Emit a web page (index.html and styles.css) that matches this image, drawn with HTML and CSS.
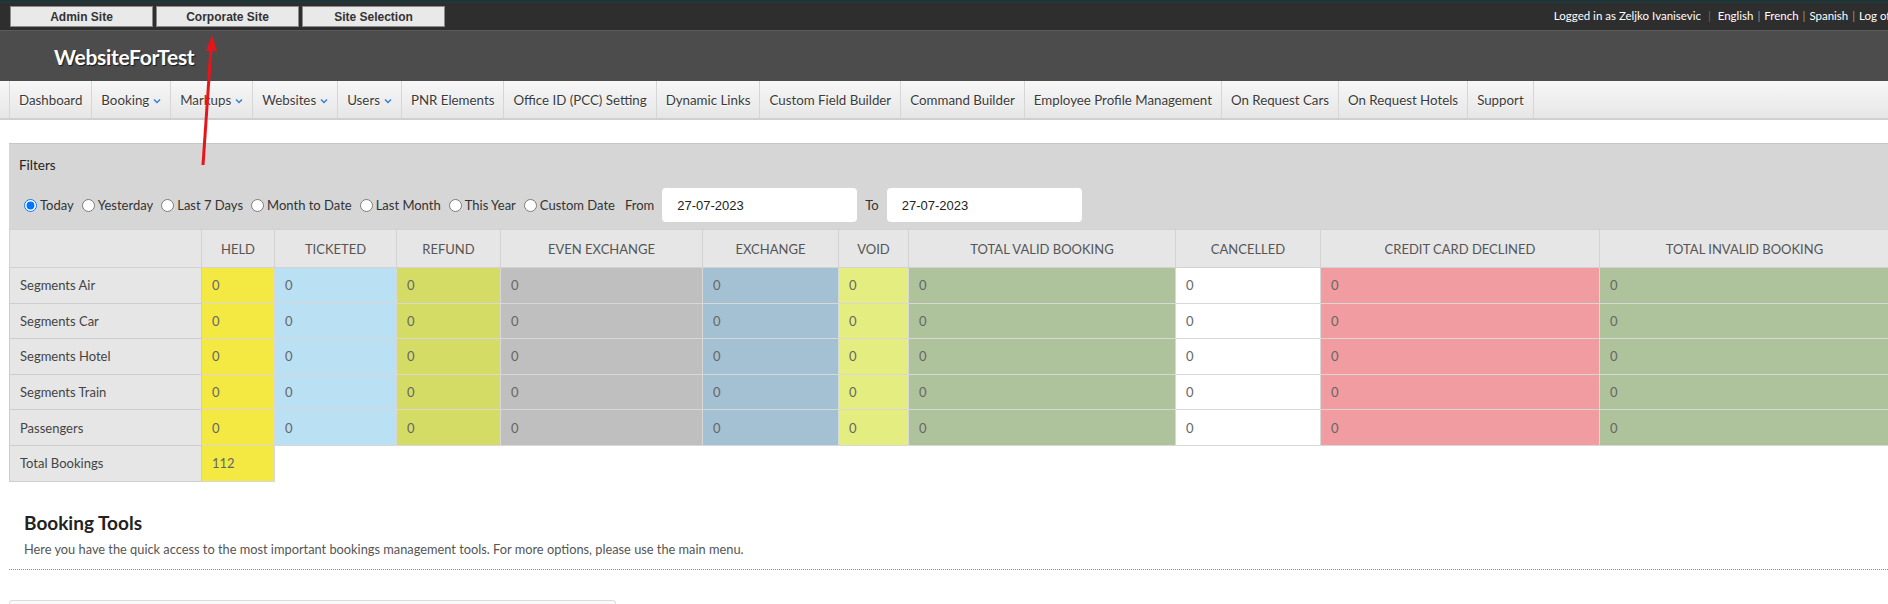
FILE: index.html
```html
<!DOCTYPE html>
<html lang="en">

<head>
    <meta charset="UTF-8">
    <meta name="viewport" content="width=device-width, initial-scale=1.0">
    <title>WebsiteForTest - Dashboard</title>
    <link rel="stylesheet" href="styles.css">
</head>

<body>
    <div class="page">
        <div class="topbar">
            <div class="sites">
                <button class="site-btn">Admin Site</button>
                <button class="site-btn">Corporate Site</button>
                <button class="site-btn">Site Selection</button>
            </div>
            <div class="user">
                Logged in as Zeljko Ivanisevic <span class="sep light">|</span> English <span class="sep">|</span> French <span class="sep">|</span> Spanish <span class="sep">|</span> Log off
            </div>
        </div>
        <div class="brand">WebsiteForTest</div>
        <ul class="nav">
            <li>Dashboard</li>
            <li>Booking <svg class="chev" width="8" height="6" viewBox="0 0 8 6"><path d="M1 1.5l3 3 3-3" fill="none" stroke="#2f7fd8" stroke-width="1.4"/></svg></li>
            <li>Markups <svg class="chev" width="8" height="6" viewBox="0 0 8 6"><path d="M1 1.5l3 3 3-3" fill="none" stroke="#2f7fd8" stroke-width="1.4"/></svg></li>
            <li>Websites <svg class="chev" width="8" height="6" viewBox="0 0 8 6"><path d="M1 1.5l3 3 3-3" fill="none" stroke="#2f7fd8" stroke-width="1.4"/></svg></li>
            <li>Users <svg class="chev" width="8" height="6" viewBox="0 0 8 6"><path d="M1 1.5l3 3 3-3" fill="none" stroke="#2f7fd8" stroke-width="1.4"/></svg></li>
            <li>PNR Elements</li>
            <li>Office ID (PCC) Setting</li>
            <li>Dynamic Links</li>
            <li>Custom Field Builder</li>
            <li>Command Builder</li>
            <li>Employee Profile Management</li>
            <li>On Request Cars</li>
            <li>On Request Hotels</li>
            <li>Support</li>
        </ul>

        <div class="content">
            <div class="filters">
                <div class="filters-title">Filters</div>
                <div class="filter-row">
                    <label><input type="radio" name="period" checked>Today</label>
                    <label><input type="radio" name="period">Yesterday</label>
                    <label><input type="radio" name="period">Last 7 Days</label>
                    <label><input type="radio" name="period">Month to Date</label>
                    <label><input type="radio" name="period">Last Month</label>
                    <label><input type="radio" name="period">This Year</label>
                    <label><input type="radio" name="period">Custom Date</label>
                    <span class="lbl from">From</span>
                    <input type="text" class="date" value="27-07-2023">
                    <span class="lbl">To</span>
                    <input type="text" class="date" value="27-07-2023">
                </div>
            </div>

            <table class="stats">
                <tr>
                    <th class="c-label"></th>
                    <th class="c-held">HELD</th>
                    <th class="c-tick">TICKETED</th>
                    <th class="c-ref">REFUND</th>
                    <th class="c-even">EVEN EXCHANGE</th>
                    <th class="c-exch">EXCHANGE</th>
                    <th class="c-void">VOID</th>
                    <th class="c-valid">TOTAL VALID BOOKING</th>
                    <th class="c-canc">CANCELLED</th>
                    <th class="c-ccd">CREDIT CARD DECLINED</th>
                    <th class="c-inv">TOTAL INVALID BOOKING</th>
                </tr>
                <tr>
                    <td class="label">Segments Air</td>
                    <td class="held">0</td><td class="tick">0</td><td class="ref">0</td><td class="even">0</td><td class="exch">0</td>
                    <td class="void">0</td><td class="valid">0</td><td class="canc">0</td><td class="ccd">0</td><td class="inv">0</td>
                </tr>
                <tr>
                    <td class="label">Segments Car</td>
                    <td class="held">0</td><td class="tick">0</td><td class="ref">0</td><td class="even">0</td><td class="exch">0</td>
                    <td class="void">0</td><td class="valid">0</td><td class="canc">0</td><td class="ccd">0</td><td class="inv">0</td>
                </tr>
                <tr>
                    <td class="label">Segments Hotel</td>
                    <td class="held">0</td><td class="tick">0</td><td class="ref">0</td><td class="even">0</td><td class="exch">0</td>
                    <td class="void">0</td><td class="valid">0</td><td class="canc">0</td><td class="ccd">0</td><td class="inv">0</td>
                </tr>
                <tr>
                    <td class="label">Segments Train</td>
                    <td class="held">0</td><td class="tick">0</td><td class="ref">0</td><td class="even">0</td><td class="exch">0</td>
                    <td class="void">0</td><td class="valid">0</td><td class="canc">0</td><td class="ccd">0</td><td class="inv">0</td>
                </tr>
                <tr>
                    <td class="label">Passengers</td>
                    <td class="held">0</td><td class="tick">0</td><td class="ref">0</td><td class="even">0</td><td class="exch">0</td>
                    <td class="void">0</td><td class="valid">0</td><td class="canc">0</td><td class="ccd">0</td><td class="inv">0</td>
                </tr>
                <tr>
                    <td class="label">Total Bookings</td>
                    <td class="held">112</td>
                </tr>
            </table>

            <div class="tools">
                <h2>Booking Tools</h2>
                <p>Here you have the quick access to the most important bookings management tools. For more options, please use the main menu.</p>
            </div>
            <div class="tools-box"></div>
        </div>

        <!-- annotation arrow from the screenshot -->
        <svg class="arrow" width="260" height="200" viewBox="0 0 260 200">
            <line x1="203" y1="165" x2="211" y2="48" stroke="#e8141b" stroke-width="3"/>
            <polygon points="212,35 217,51 206,51" fill="#e8141b"/>
        </svg>
    </div>
</body>

</html>
```

FILE: styles.css
```css
* {
    margin: 0;
    padding: 0;
    box-sizing: border-box;
}

html,
body {
    overflow: hidden;
}

body {
    background-color: #fff;
    font-family: Lato, "Liberation Sans", sans-serif;
    color: #444;
}

.page {
    position: relative;
    width: 1900px;
}

/* top bar */

.topbar {
    display: flex;
    justify-content: space-between;
    align-items: flex-start;
    height: 31px;
    padding: 6px 6px 0 10px;
    background: linear-gradient(#1c3436 0, #22393b 3px, #2e2e2e 3px);
    border-bottom: 1px solid #5a5a5a;
}

.sites {
    display: flex;
    gap: 3px;
}

.site-btn {
    width: 143px;
    height: 21px;
    background-color: #e9e9e9;
    border: 1px solid #8a8a8a;
    font-family: "Liberation Sans", Arial, sans-serif;
    font-size: 12px;
    font-weight: bold;
    color: #333;
}

.user {
    margin-top: 3px;
    font-size: 11.5px;
    color: #fff;
    white-space: nowrap;
}

.sep {
    color: #999;
    padding: 0 1px;
}

.sep.light {
    color: #666;
    padding: 0 4px;
}

/* brand */

.brand {
    height: 50px;
    padding-left: 54px;
    display: flex;
    align-items: center;
    background-color: #4c4c4c;
    color: #fff;
    font-size: 21px;
    font-weight: bold;
    letter-spacing: -0.3px;
    text-shadow: 1px 1px 1px #1a1a1a;
}

/* main menu */

.nav {
    display: flex;
    height: 39px;
    padding-left: 9px;
    list-style: none;
    background: linear-gradient(#f7f7f7, #e6e6e6);
    border-bottom: 2px solid #cfcfcf;
}

.nav li {
    display: flex;
    align-items: center;
    gap: 4px;
    padding: 0 9px;
    border-left: 1px solid #d6d6d6;
    font-size: 13.3px;
    color: #3a3a3a;
    text-shadow: 0 1px 0 #fff;
    white-space: nowrap;
    cursor: pointer;
}

.nav li:last-child {
    border-right: 1px solid #d6d6d6;
}

.chev {
    margin-top: 2px;
}

/* content */

.content {
    padding: 23px 0 0 9px;
}

.filters {
    height: 86px;
    padding: 11px 10px 0 10px;
    background-color: #d6d6d6;
    border-top: 1px solid #c6c6c6;
}

.filters-title {
    font-size: 13.5px;
    line-height: 20px;
    color: #222;
}

.filter-row {
    display: flex;
    align-items: center;
    margin-top: 13px;
    font-size: 13px;
    color: #333;
    white-space: nowrap;
}

.filter-row label {
    display: flex;
    align-items: center;
    margin-right: 3px;
}

.filter-row input[type="radio"] {
    margin: 0 3px 0 5px;
    width: 13px;
    height: 13px;
}

.lbl {
    margin: 0 8px;
}

.lbl.from {
    margin-left: 7px;
}

.date {
    width: 195px;
    height: 34px;
    padding: 0 15px;
    border: none;
    border-radius: 4px;
    background-color: #fff;
    font-family: "Liberation Sans", Arial, sans-serif;
    font-size: 13px;
    color: #222;
}

/* stats table */

.stats {
    border-collapse: collapse;
    table-layout: fixed;
    width: 1880px;
    font-size: 13px;
}

.stats th {
    height: 38px;
    background-color: #e6e6e6;
    border: 1px solid #d2d2d2;
    font-weight: normal;
    color: #555;
    text-align: center;
}

.stats td {
    height: 35.6px;
    padding: 0 10px;
    border: 1px solid #d8d8d8;
    color: #666;
}

.c-label { width: 192px; }
.c-held { width: 73px; }
.c-tick { width: 122px; }
.c-ref { width: 104px; }
.c-even { width: 202px; }
.c-exch { width: 136px; }
.c-void { width: 70px; }
.c-valid { width: 267px; }
.c-canc { width: 145px; }
.c-ccd { width: 279px; }
.c-inv { width: 290px; }

.stats td.label {
    background-color: #e6e6e6;
    border-color: #cdcdcd;
    color: #444;
}

.held { background-color: #f3e942; }
.tick { background-color: #bae0f3; }
.ref { background-color: #d5dc65; }
.even { background-color: #bfbfbf; }
.exch { background-color: #a4c1d3; }
.void { background-color: #e4ed80; }
.valid { background-color: #aec29c; }
.canc { background-color: #fff; }
.ccd { background-color: #f19ca0; }
.inv { background-color: #aec29c; }

/* booking tools */

.tools {
    padding: 29px 0 10px 15px;
    border-bottom: 1px dotted #8a8a8a;
}

.tools h2 {
    font-size: 19px;
    font-weight: bold;
    line-height: 24px;
    color: #222;
}

.tools p {
    margin-top: 4px;
    font-size: 12.8px;
    line-height: 20px;
    color: #555;
}

.tools-box {
    width: 607px;
    height: 40px;
    margin-top: 30px;
    border: 1px solid #dcdcdc;
    border-radius: 3px;
    background-color: #fafafa;
}

/* annotation */

.arrow {
    position: absolute;
    left: 0;
    top: 0;
    pointer-events: none;
}
```
